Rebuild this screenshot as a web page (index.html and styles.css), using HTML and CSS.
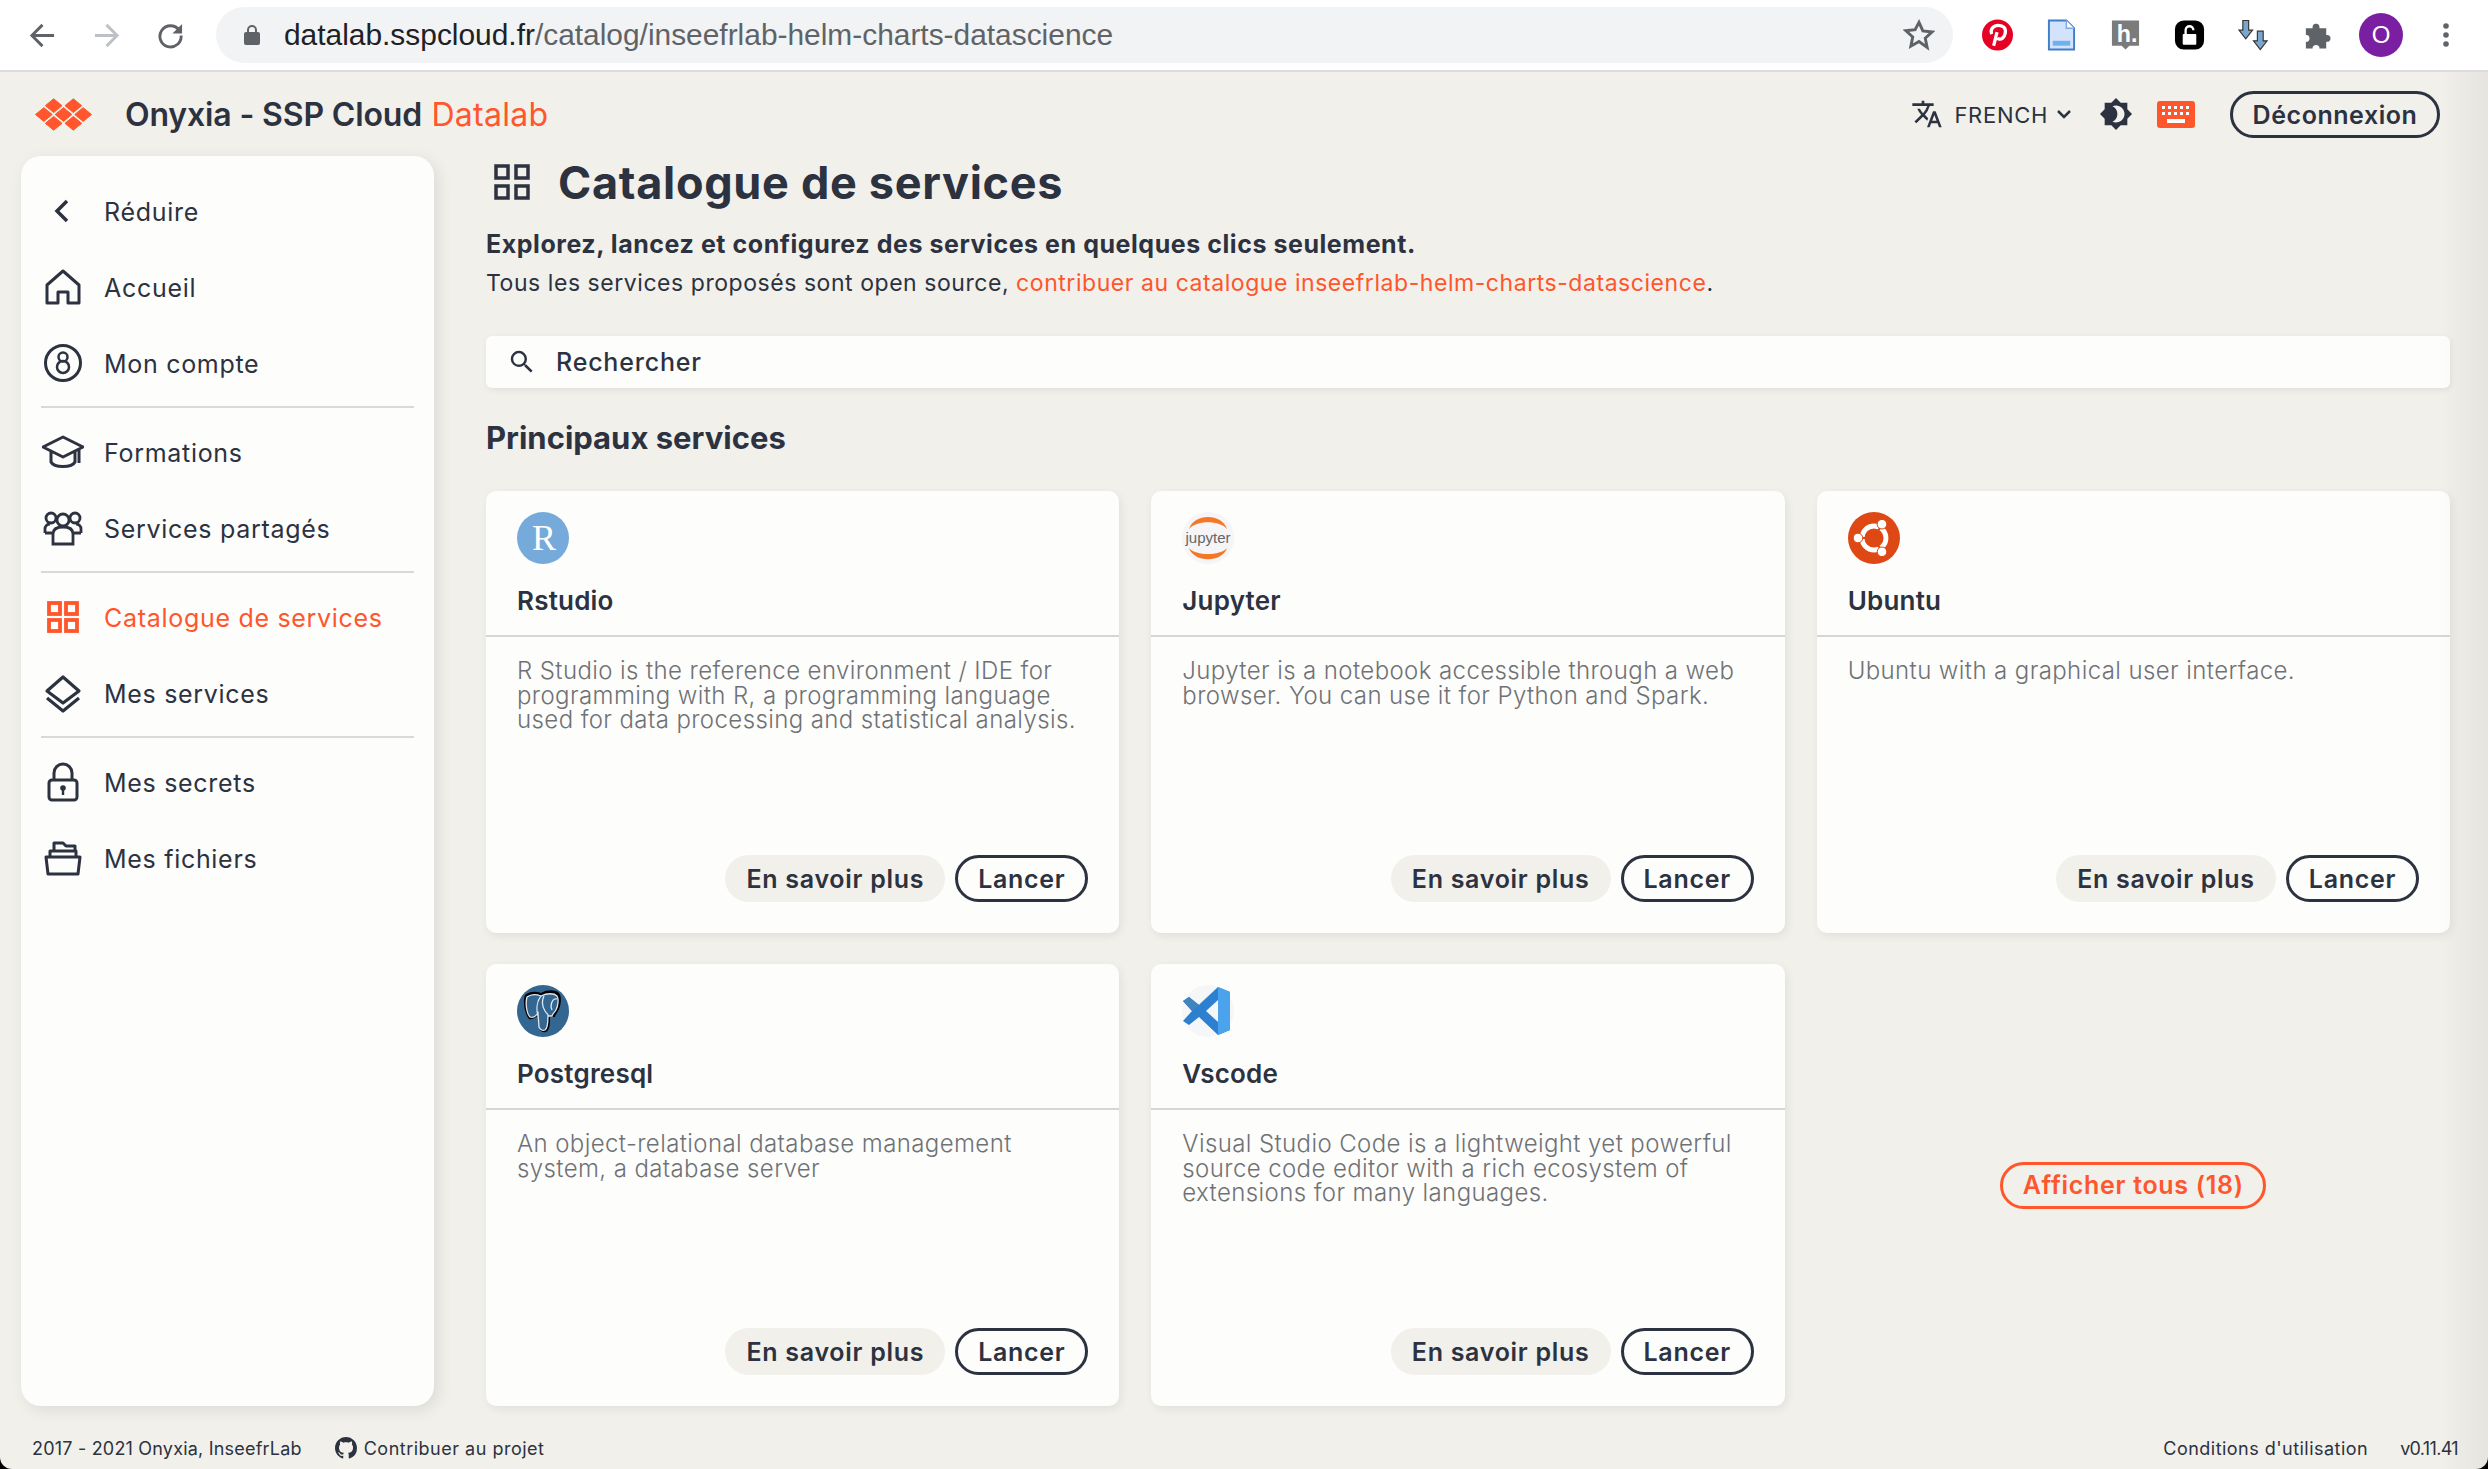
FILE: index.html
```html
<!DOCTYPE html>
<html lang="fr">
<head>
<meta charset="utf-8">
<title>Catalogue de services</title>
<link rel="stylesheet" href="styles.css">
</head>
<body>
<div class="window">
  <div class="browser">
    <div class="nav">
      <svg class="ni" viewBox="0 0 28 28"><path d="M26 14H4M14 3 3 14l11 11" fill="none" stroke="#5f6368" stroke-width="3"/></svg>
      <svg class="ni" viewBox="0 0 28 28"><path d="M2 14h22M14 3l11 11-11 11" fill="none" stroke="#bdc1c6" stroke-width="3"/></svg>
      <svg class="ni" viewBox="0 0 28 28"><path d="M23 8.5A11 11 0 1 0 25 14" fill="none" stroke="#5f6368" stroke-width="3"/><path d="M26 2v10H16z" fill="#5f6368"/></svg>
    </div>
    <div class="omnibox">
      <svg class="lock" viewBox="0 0 16 22"><path d="M4 9V6a4 4 0 0 1 8 0v3" fill="none" stroke="#5f6368" stroke-width="2"/><rect y="8" width="16" height="13" rx="2" fill="#5f6368"/></svg>
      <span class="url"><span class="host">datalab.sspcloud.fr</span>/catalog/inseefrlab-helm-charts-datascience</span>
      <svg class="star" viewBox="0 0 24 24"><path d="m12 2.500 2.900 6.400 6.900.8-5.100 4.700 1.400 6.900L12 16.900l-6.100 3.500 1.400-6.900-5.100-4.700 6.900-.8z" fill="none" stroke="#5f6368" stroke-width="2.200"/></svg>
    </div>
    <div class="exts">
      <svg class="ext" viewBox="0 0 32 32"><circle cx="16" cy="16" r="16" fill="#e60023"/><path d="M12 27c1-3 2-8 3.500-14M10 15c-2-5 2-9 7-9s8 3 7 8-4 7-7 6-2-2-2-2" fill="none" stroke="#fff" stroke-width="3.400"/></svg>
      <svg class="ext" viewBox="0 0 32 32"><path d="M3 1h18l8 8v22H3z" fill="#d3e3fb" stroke="#3f7fc9" stroke-width="2"/><path d="M21 1v8h8" fill="#fff" stroke="#7fa9dd" stroke-width="1.500"/><rect x="7" y="22" width="18" height="5" fill="#6fb1ec"/></svg>
      <svg class="ext" viewBox="0 0 32 32"><path d="M2 1h28v26H20l-4 4-4-4H2z" fill="#7b7b7b"/><text x="7" y="23" class="ext-h">h.</text></svg>
      <svg class="ext" viewBox="0 0 32 32"><rect x="1" y="1" width="30" height="30" rx="9" fill="#000"/><rect x="9" y="15" width="14" height="11" rx="1" fill="#fff"/><path d="M12 15v-4a4 4 0 0 1 8 0" fill="none" stroke="#fff" stroke-width="2.400"/></svg>
      <svg class="ext" viewBox="0 0 32 32"><path d="M5 1h6v10h4l-7 9-7-9h4z" fill="#7ba6cc" stroke="#333" stroke-width="1.200"/><path d="M20 12h6v10h4l-7 9-7-9h4z" fill="#7ba6cc" stroke="#333" stroke-width="1.200"/></svg>
      <svg class="ext" viewBox="0 0 32 32"><path d="M4 9h7c-1-6 8-6 7 0h7v7c6-1 6 8 0 7v7h-7c1-5-8-5-7 0H4v-7c5 1 5-8 0-7z" fill="#5f6368"/></svg>
      <span class="avatar">O</span>
      <svg class="dots" viewBox="0 0 6 24"><circle cx="3" cy="3" r="2.800" fill="#5f6368"/><circle cx="3" cy="12" r="2.800" fill="#5f6368"/><circle cx="3" cy="21" r="2.800" fill="#5f6368"/></svg>
    </div>
  </div>

  <div class="app">
    <header class="topbar">
      <svg class="logo" viewBox="0 0 56 33"><g fill="#ff562c" stroke="#ff562c" stroke-width="1" stroke-linejoin="round"><path d="M18 .5 26.500 7.500 18 14.500 9.500 7.500z"/><path d="M38 .5 46.500 7.500 38 14.500 29.500 7.500z"/><path d="M8 9.500 16.500 16.500 8 23.500-.5 16.500z"/><path d="M28 9.500 36.500 16.500 28 23.500 19.500 16.500z"/><path d="M48 9.500 56.500 16.500 48 23.500 39.500 16.500z"/><path d="M18 18.500 26.500 25.500 18 32.500 9.500 25.500z"/><path d="M38 18.500 46.500 25.500 38 32.500 29.500 25.500z"/></g></svg>
      <div class="brand"><strong>Onyxia - SSP Cloud</strong> <span class="accent">Datalab</span></div>
      <div class="top-actions">
        <svg class="tr-icon" viewBox="0 0 24 24"><path d="m12.900 15.100-2.500-2.500.03-.03A17.500 17.500 0 0 0 14.100 6H17V4h-7V2H8v2H1v2h11.200A15.700 15.700 0 0 1 9 11.350 15.700 15.700 0 0 1 6.700 8h-2c.73 1.630 1.730 3.170 2.980 4.560l-5.090 5.020L4 19l5-5 3.110 3.110zM18.500 10h-2L12 22h2l1.120-3h4.750L21 22h2zm-2.620 7 1.620-4.330L19.120 17z" fill="#2c323f"/></svg>
        <span class="lang">FRENCH</span>
        <svg class="chev" viewBox="0 0 16 10"><path d="m2 2 6 6 6-6" fill="none" stroke="#2c323f" stroke-width="2.500"/></svg>
        <svg class="bright" viewBox="0 0 24 24"><path d="M20 8.690V4h-4.690L12 .69 8.690 4H4v4.690L.69 12 4 15.310V20h4.690L12 23.310 15.310 20H20v-4.690L23.310 12zM12 18c-.89 0-1.740-.2-2.500-.55C11.560 16.500 13 14.420 13 12s-1.440-4.500-3.500-5.450C10.260 6.200 11.110 6 12 6c3.310 0 6 2.690 6 6s-2.690 6-6 6z" fill="#2c323f"/></svg>
        <svg class="kbd" viewBox="0 0 38 27"><rect width="38" height="27" rx="3" fill="#ff562c"/><g fill="#fff"><rect x="5" y="5" width="3" height="3"/><rect x="11" y="5" width="3" height="3"/><rect x="17" y="5" width="3" height="3"/><rect x="23" y="5" width="3" height="3"/><rect x="29" y="5" width="3" height="3"/><rect x="5" y="11" width="3" height="3"/><rect x="11" y="11" width="3" height="3"/><rect x="17" y="11" width="3" height="3"/><rect x="23" y="11" width="3" height="3"/><rect x="29" y="11" width="3" height="3"/><rect x="10" y="18" width="18" height="4"/></g></svg>
        <a class="btn btn-outline btn-logout">Déconnexion</a>
      </div>
    </header>

    <div class="shell">
      <nav class="sidebar">
        <a class="item"><svg class="ic" viewBox="0 0 42 42"><path d="m25 11-10 10 10 10" fill="none" stroke="currentColor" stroke-width="3.500"/></svg><span>Réduire</span></a>
        <a class="item"><svg class="ic" viewBox="0 0 42 42"><path d="M5 37V19L21 5l16 14v18H26V26H16v11z" fill="none" stroke="currentColor" stroke-width="3" stroke-linejoin="round"/></svg><span>Accueil</span></a>
        <a class="item"><svg class="ic" viewBox="0 0 42 42"><circle cx="21" cy="21" r="17.500" fill="none" stroke="currentColor" stroke-width="3"/><circle cx="21" cy="15" r="4.500" fill="none" stroke="currentColor" stroke-width="2.500"/><circle cx="21" cy="25" r="6" fill="none" stroke="currentColor" stroke-width="2.500"/></svg><span>Mon compte</span></a>
        <hr class="rule">
        <a class="item"><svg class="ic" viewBox="0 0 42 42"><path d="M1 16 21 6l20 10-20 10zM9 21v10c3 6 21 6 24 0V21M37 18v14" fill="none" stroke="currentColor" stroke-width="3" stroke-linejoin="round"/></svg><span>Formations</span></a>
        <a class="item"><svg class="ic" viewBox="0 0 42 42"><g fill="none" stroke="currentColor" stroke-width="2.800"><circle cx="9" cy="11" r="5"/><circle cx="33" cy="11" r="5"/><circle cx="21" cy="13" r="6"/><path d="M3 26v-4c0-3 2-5 5-5M39 26v-4c0-3-2-5-5-5M11 37V27c0-4 3-7 10-7s10 3 10 7v10zM3 26h8M31 26h8"/></g></svg><span>Services partagés</span></a>
        <hr class="rule">
        <a class="item active"><svg class="ic" viewBox="0 0 42 42"><g fill="none" stroke="currentColor" stroke-width="3.800"><rect x="7" y="7" width="11" height="11"/><rect x="24" y="7" width="11" height="11"/><rect x="7" y="24" width="11" height="11"/><rect x="24" y="24" width="11" height="11"/></g></svg><span>Catalogue de services</span></a>
        <a class="item"><svg class="ic" viewBox="0 0 42 42"><path d="M21 5 37 19 21 31 5 19zM5 26l16 13 16-13" fill="none" stroke="currentColor" stroke-width="3.200" stroke-linejoin="round"/></svg><span>Mes services</span></a>
        <hr class="rule">
        <a class="item"><svg class="ic" viewBox="0 0 42 42"><rect x="7" y="19" width="28" height="20" rx="3" fill="none" stroke="currentColor" stroke-width="3"/><path d="M12 18v-6a9 9 0 0 1 18 0v6" fill="none" stroke="currentColor" stroke-width="3"/><circle cx="21" cy="27" r="2.800" fill="currentColor"/><rect x="19.800" y="27" width="2.400" height="7" fill="currentColor"/></svg><span>Mes secrets</span></a>
        <a class="item"><svg class="ic" viewBox="0 0 42 42"><g fill="none" stroke="currentColor" stroke-width="3" stroke-linejoin="round"><path d="M4 20h34l-2 17H6z"/><path d="M8 20v-6h26v6"/><path d="M12 13V6h9l3 3h9v4"/></g></svg><span>Mes fichiers</span></a>
      </nav>

      <main class="content">
        <div class="page-head">
          <svg class="head-icon" viewBox="0 0 36 36"><g fill="none" stroke="#2c323f" stroke-width="3.500"><rect x="2" y="2" width="12" height="12"/><rect x="22" y="2" width="12" height="12"/><rect x="2" y="22" width="12" height="12"/><rect x="22" y="22" width="12" height="12"/></g></svg>
          <h1>Catalogue de services</h1>
        </div>
        <p class="lead">Explorez, lancez et configurez des services en quelques clics seulement.</p>
        <p class="sub">Tous les services proposés sont open source, <a class="accent">contribuer au catalogue inseefrlab-helm-charts-datascience</a>.</p>
        <div class="search">
          <svg class="search-ic" viewBox="0 0 24 24"><path d="M15.500 14h-.79l-.28-.27A6.470 6.470 0 0 0 16 9.500 6.500 6.500 0 1 0 9.500 16c1.610 0 3.090-.59 4.230-1.570l.27.28v.79l5 4.990L20.490 19zm-6 0C7.010 14 5 11.990 5 9.500S7.010 5 9.500 5 14 7.010 14 9.500 11.990 14 9.500 14z" fill="#2c323f"/></svg>
          <span>Rechercher</span>
        </div>
        <h2>Principaux services</h2>
        <div class="grid">
          <article class="card">
            <div class="card-top">
              <svg class="cl" viewBox="0 0 52 52"><circle cx="26" cy="26" r="26" fill="#75aadb"/><text x="27" y="38" class="r-glyph">R</text></svg>
              <h3>Rstudio</h3>
            </div>
            <p class="desc">R Studio is the reference environment / IDE for programming with R, a programming language used for data processing and statistical analysis.</p>
            <div class="actions"><a class="btn btn-soft">En savoir plus</a><a class="btn btn-outline">Lancer</a></div>
          </article>
          <article class="card">
            <div class="card-top">
              <svg class="cl" viewBox="0 0 52 52"><circle cx="26" cy="26" r="26" fill="#f5f5f7"/><path d="M7 17C12 1 40 1 45 17 38 8 14 8 7 17z" fill="#f37726"/><path d="M7 36c5 15 33 15 38 0-7 8-31 8-38 0z" fill="#f37726"/><text x="26" y="31" class="jup">jupyter</text></svg>
              <h3>Jupyter</h3>
            </div>
            <p class="desc">Jupyter is a notebook accessible through a web browser. You can use it for Python and Spark.</p>
            <div class="actions"><a class="btn btn-soft">En savoir plus</a><a class="btn btn-outline">Lancer</a></div>
          </article>
          <article class="card">
            <div class="card-top">
              <svg class="cl" viewBox="0 0 52 52"><circle cx="26" cy="26" r="26" fill="#dd4814"/><circle cx="26" cy="26" r="12" fill="none" stroke="#fff" stroke-width="4.800"/><g stroke="#dd4814" stroke-width="2"><path d="M26 26H8M26 26l9-15.600M26 26l9 15.600"/></g><g stroke="#dd4814" stroke-width="1" fill="#fff"><circle cx="10" cy="26" r="4.800"/><circle cx="34" cy="12.200" r="4.800"/><circle cx="34" cy="39.800" r="4.800"/></g></svg>
              <h3>Ubuntu</h3>
            </div>
            <p class="desc">Ubuntu with a graphical user interface.</p>
            <div class="actions"><a class="btn btn-soft">En savoir plus</a><a class="btn btn-outline">Lancer</a></div>
          </article>
          <article class="card">
            <div class="card-top">
              <svg class="cl" viewBox="0 0 52 52"><circle cx="26" cy="26" r="26" fill="#336791"/><path d="M8 10c5-4 11-4 16-2 7-4 15-3 18 0 3 3 2 12 0 16-1 3-4 6-4 8h-5c0 6 0 13-4 15-3 1-6-1-7-4l-1-13c-2 3-6 5-9 4-3-3-7-16-4-24z" fill="#000"/><path d="M10 12c4-3 9-3 14-1 6-3 13-3 16 0 2 3 1 10-1 14-1 2-4 4-4 6h-4c0 6 0 12-3 14-2 1-5 0-6-3l-1-14c-2 3-5 5-8 4-3-3-5-13-3-20z" fill="#336791"/><path d="M10 12c4-3 9-3 14-1 6-3 13-3 16 0 2 3 1 10-1 14-1 2-4 4-4 6h-4c0 6 0 12-3 14-2 1-5 0-6-3l-1-14c-2 3-5 5-8 4-3-3-5-13-3-20zM24 11c-4 5-5 13-3 20M27 11c-2 4-2 10 1 15 2 3 4 4 3 5M40 14c-3-1-6 2-6 8l1 3" fill="none" stroke="#dfe8f0" stroke-width="1.300"/></svg>
              <h3>Postgresql</h3>
            </div>
            <p class="desc">An object-relational database management system, a database server</p>
            <div class="actions"><a class="btn btn-soft">En savoir plus</a><a class="btn btn-outline">Lancer</a></div>
          </article>
          <article class="card">
            <div class="card-top">
              <svg class="cl" viewBox="0 0 52 52"><circle cx="26" cy="26" r="26" fill="#f5f6f8"/><path d="M36 2 17 20 7 12l-6 4 9 10-9 10 6 4 10-8 19 18 12-5V7z" fill="#2d7fd0"/><path d="M36 2 48 7v38l-12 5z" fill="#4ba3ee"/><path d="M36 15 24 26l12 11z" fill="#f5f6f8"/><path d="M36 2 17 20 7 12l-6 4 9 10 26-24z" fill="#3f84bf"/></svg>
              <h3>Vscode</h3>
            </div>
            <p class="desc">Visual Studio Code is a lightweight yet powerful source code editor with a rich ecosystem of extensions for many languages.</p>
            <div class="actions"><a class="btn btn-soft">En savoir plus</a><a class="btn btn-outline">Lancer</a></div>
          </article>
          <div class="show-all"><a class="btn btn-accent">Afficher tous (18)</a></div>
        </div>
      </main>
    </div>

    <footer class="footer">
      <span>2017 - 2021 Onyxia, InseefrLab</span>
      <span class="gh"><svg class="gh-ic" viewBox="0 0 16 16"><path d="M8 0C3.580 0 0 3.580 0 8c0 3.540 2.290 6.530 5.470 7.590.4.070.55-.17.55-.38 0-.19-.01-.82-.01-1.490-2.010.37-2.530-.49-2.690-.94-.09-.23-.48-.94-.82-1.130-.28-.15-.68-.52-.01-.53.63-.01 1.080.58 1.230.82.720 1.210 1.870.87 2.330.66.070-.52.280-.87.510-1.070-1.780-.2-3.640-.89-3.640-3.950 0-.87.310-1.590.820-2.150-.08-.2-.360-1.020.08-2.120 0 0 .67-.21 2.200.82.640-.18 1.320-.27 2-.27s1.360.09 2 .27c1.530-1.040 2.200-.82 2.200-.82.440 1.100.160 1.920.080 2.120.510.560.820 1.270.820 2.150 0 3.070-1.870 3.750-3.650 3.950.290.250.540.730.540 1.480 0 1.070-.01 1.930-.01 2.200 0 .210.150.460.550.380A8.010 8.010 0 0 0 16 8c0-4.420-3.580-8-8-8z" fill="#2c323f"/></svg>Contribuer au projet</span>
      <span class="foot-right">Conditions d'utilisation</span>
      <span class="version">v0.11.41</span>
    </footer>
    <div class="edge"></div>
  </div>
</div>
</body>
</html>
```
FILE: styles.css
```css
* { box-sizing: border-box; }
html, body { margin: 0; height: 100%; background: #000; }
body { font-family: Inter, "Open Sans", sans-serif; color: #2c323f; overflow: hidden; }
.window { width: 2488px; height: 1469px; display: flex; flex-direction: column; background: #f1f0eb; border-radius: 0 0 12px 12px; overflow: hidden; }
.accent { color: #ff562c; }

.browser { height: 72px; flex: none; display: flex; align-items: center; background: #fff; border-bottom: 2px solid #dcdce0; }
.nav { display: flex; gap: 37px; padding-left: 29px; width: 216px; flex: none; }
.ni { width: 27px; height: 27px; }
.omnibox { width: 1737px; height: 56px; flex: none; display: flex; align-items: center; padding: 0 18px 0 28px; background: #f1f3f4; border-radius: 28px; }
.lock { width: 16px; height: 22px; }
.url { margin-left: 24px; flex: 1; font: 29.900px "Liberation Sans", Arial, sans-serif; color: #5f6368; white-space: nowrap; }
.host { color: #202124; }
.star { width: 32px; height: 32px; }
.exts { flex: 1; display: flex; align-items: center; padding-left: 29px; gap: 33px; }
.ext { width: 31px; height: 32px; flex: none; }
.ext-h { font: bold 24px "Liberation Sans", Arial, sans-serif; fill: #fff; }
.avatar { width: 44px; height: 44px; margin-left: -7px; border-radius: 50%; background: #7b1fa2; color: #fff; font: 24px "Liberation Sans", Arial, sans-serif; display: flex; align-items: center; justify-content: center; flex: none; }
.dots { width: 6px; height: 24px; margin-left: 7px; flex: none; }

.app { position: relative; flex: 1; display: flex; flex-direction: column; min-height: 0; }
.edge { position: absolute; top: 0; right: 0; bottom: 0; width: 50px; background: linear-gradient(to right, rgba(0,0,0,0), rgba(0,0,0,.05)); pointer-events: none; }

.topbar { height: 84px; flex: none; display: flex; align-items: center; padding: 0 48px 0 36px; }
.logo { width: 55px; height: 33px; flex: none; overflow: visible; }
.brand { margin-left: 34px; font-size: 32px; letter-spacing: .3px; white-space: nowrap; }
.brand strong { font-weight: 600; letter-spacing: -.15px; }
.top-actions { margin-left: auto; display: flex; align-items: center; }
.tr-icon { width: 32px; height: 32px; }
.lang { margin: 2px 0 0 11px; font-size: 22px; letter-spacing: .7px; }
.chev { width: 16px; height: 10px; margin-left: 8px; }
.bright { width: 34px; height: 34px; margin-left: 27px; }
.kbd { width: 38px; height: 27px; margin-left: 24px; }
.btn { display: inline-flex; align-items: center; justify-content: center; height: 47px; border-radius: 24px; font-size: 25px; font-weight: 600; letter-spacing: .7px; white-space: nowrap; }
.btn-outline { border: 3px solid #2c323f; color: #2c323f; }
.btn-soft { background: #f1f0eb; color: #2c323f; }
.btn-accent { border: 3px solid #ff562c; color: #ff562c; width: 266px; }
.btn-logout { width: 210px; margin-left: 35px; padding-top: 2px; letter-spacing: .55px; }

.shell { flex: none; height: 1250px; display: flex; padding: 0 38px 0 21px; gap: 52px; }
.sidebar { width: 413px; flex: none; background: #fdfdfc; border-radius: 20px; padding: 17px 20px 0; box-shadow: 4px 4px 16px rgba(0,0,0,.09); }
.item { display: flex; align-items: center; height: 76px; font-size: 25px; letter-spacing: .7px; gap: 20px; }
.item span { white-space: nowrap; padding-top: 1px; }
.item.active { color: #ff562c; }
.ic { width: 42px; height: 42px; margin-left: 1px; flex: none; }
.rule { height: 2px; margin: 5px 0 6px; border: 0; background: #d9d9d7; }

.content { flex: 1; min-width: 0; }
.page-head { height: 52px; display: flex; align-items: center; gap: 28px; padding-left: 8px; }
.head-icon { width: 36px; height: 36px; flex: none; }
h1 { margin: 0; font-size: 45px; font-weight: 700; letter-spacing: .7px; white-space: nowrap; }
.lead { margin: 21px 0 0; font-size: 25px; line-height: 30px; font-weight: 700; letter-spacing: .55px; }
.sub { margin: 9px 0 0; font-size: 23px; line-height: 30px; letter-spacing: .55px; }
.search { height: 52px; margin-top: 38px; display: flex; align-items: center; gap: 19px; padding-left: 21px; background: #fdfdfc; border-radius: 6px; font-size: 25px; font-weight: 500; letter-spacing: .8px; box-shadow: 1px 2px 6px rgba(0,0,0,.07); }
.search-ic { width: 30px; height: 30px; flex: none; }
h2 { margin: 32px 0 0; font-size: 31px; line-height: 36px; font-weight: 700; }
.grid { margin-top: 35px; display: grid; grid-template-columns: repeat(3, 1fr); grid-template-rows: 442px 442px; gap: 31px 32px; }
.card { display: flex; flex-direction: column; background: #fdfdfc; border-radius: 10px; box-shadow: 2px 3px 10px rgba(0,0,0,.07); }
.card-top { height: 146px; flex: none; padding: 21px 31px 0; border-bottom: 2px solid #d6d6d4; }
.cl { width: 52px; height: 52px; display: block; }
h3 { margin: 21px 0 0; font-size: 26px; line-height: 32px; font-weight: 600; letter-spacing: .2px; }
.desc { flex: 1; margin: 0; padding: 22px 31px 0; font-size: 24px; line-height: 24.500px; font-weight: 300; letter-spacing: .4px; color: #6f7275; }
.actions { display: flex; justify-content: flex-end; gap: 10px; padding: 0 31px 31px; }
.actions .btn-soft { width: 220px; }
.actions .btn-outline { width: 133px; }
.show-all { display: flex; align-items: center; justify-content: center; }

.r-glyph { font: 36px "Liberation Serif", serif; fill: #fff; text-anchor: middle; }
.jup { font: 15px "Liberation Sans", Arial, sans-serif; fill: #666; text-anchor: middle; }

.footer { flex: 1; display: flex; align-items: center; padding: 21px 30px 0 32px; font-size: 18px; letter-spacing: .2px; }
.gh { display: inline-flex; align-items: center; gap: 7px; margin-left: 33px; letter-spacing: .5px; }
.gh-ic { width: 22px; height: 22px; }
.foot-right { margin-left: auto; margin-right: 32px; letter-spacing: .47px; }
.version { letter-spacing: -.65px; }
```
